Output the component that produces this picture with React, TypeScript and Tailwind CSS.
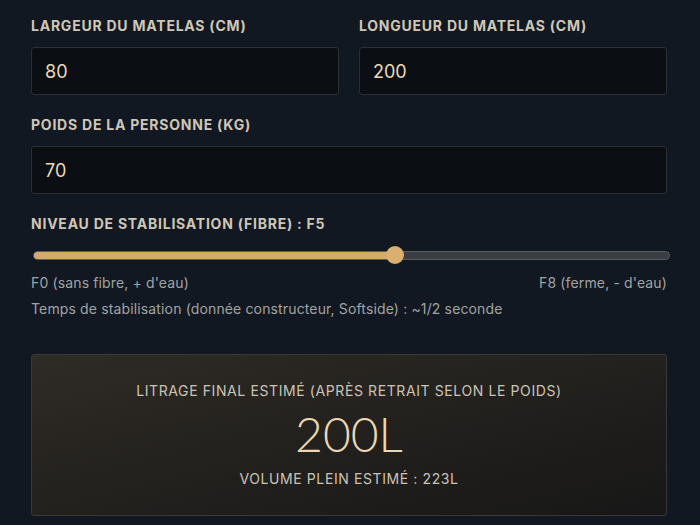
import React from "react";

const font = { fontFamily: "Inter, 'Noto Sans', sans-serif" };

function Field({ label, value }: { label: string; value: string }) {
  return (
    <div className="flex flex-col">
      <div className="text-[14px] leading-5 font-bold tracking-[0.055em] text-[#cfc6b6] uppercase">{label}</div>
      <div className="mt-[11px] h-[48px] rounded-[3px] border border-[#2b2e33] bg-[#0b0e12] flex items-center px-[13px] text-[18px] text-[#ecd9b8]">
        {value}
      </div>
    </div>
  );
}

export default function App() {
  const min = 1, max = 8, val = 5;
  const frac = (val - min) / (max - min);
  return (
    <div style={font} className="w-[700px] h-[525px] bg-[#111821] overflow-hidden">
      <div className="pl-[31px] pr-[33px] pt-[16px]">
        <div className="grid grid-cols-2 gap-5">
          <Field label="Largeur du matelas (cm)" value="80" />
          <Field label="Longueur du matelas (cm)" value="200" />
        </div>
        <div className="mt-5">
          <Field label="Poids de la personne (kg)" value="70" />
        </div>
        <div className="mt-5">
          <div className="text-[14px] leading-5 font-bold tracking-[0.055em] text-[#cfc6b6]">NIVEAU DE STABILISATION (FIBRE) : F5</div>
          <div className="relative mt-3 h-[18px] w-full">
            <div className="absolute left-[2px] right-[-3px] top-[5px] h-[9px] rounded-full border border-[#5a5c5f] bg-[#3a3d41] overflow-hidden">
              <div className="h-full bg-[#d6ab67]" style={{ width: `calc(${frac * 100}% - ${frac * 18}px + 9px)` }} />
            </div>
            <div
              className="absolute top-0 h-[18px] w-[18px] rounded-full bg-[#d9b06f]"
              style={{ left: `calc(${frac * 100}% - ${frac * 18}px + 2px)` }}
            />
          </div>
          <div className="mt-[9px] flex justify-between text-[14px] leading-5 tracking-[0.01em] text-[#a3a3a3]">
            <span>F0 (sans fibre, + d'eau)</span>
            <span>F8 (ferme, - d'eau)</span>
          </div>
          <div className="mt-[6px] text-[14px] leading-5 tracking-[0.01em] text-[#a3a3a3]">
            Temps de stabilisation (donnée constructeur, Softside) : ~1/2 seconde
          </div>
        </div>
        <div className="mt-[35px] h-[162px] rounded-[3px] border border-[#3a3833] bg-gradient-to-br from-[#2f2b25] to-[#171717] flex flex-col items-center pt-[26px]">
          <div className="text-[14px] leading-5 tracking-[0.043em] text-[#cbc3b6]">LITRAGE FINAL ESTIMÉ (APRÈS RETRAIT SELON LE POIDS)</div>
          <div className="mt-[9px] text-[48px] leading-[48px] font-light text-[#ecd7b3]" style={{ fontFamily: "Lato, sans-serif" }}>200L</div>
          <div className="mt-[11px] text-[14px] leading-5 tracking-[0.043em] text-[#cbc3b6]">VOLUME PLEIN ESTIMÉ : 223L</div>
        </div>
      </div>
    </div>
  );
}
